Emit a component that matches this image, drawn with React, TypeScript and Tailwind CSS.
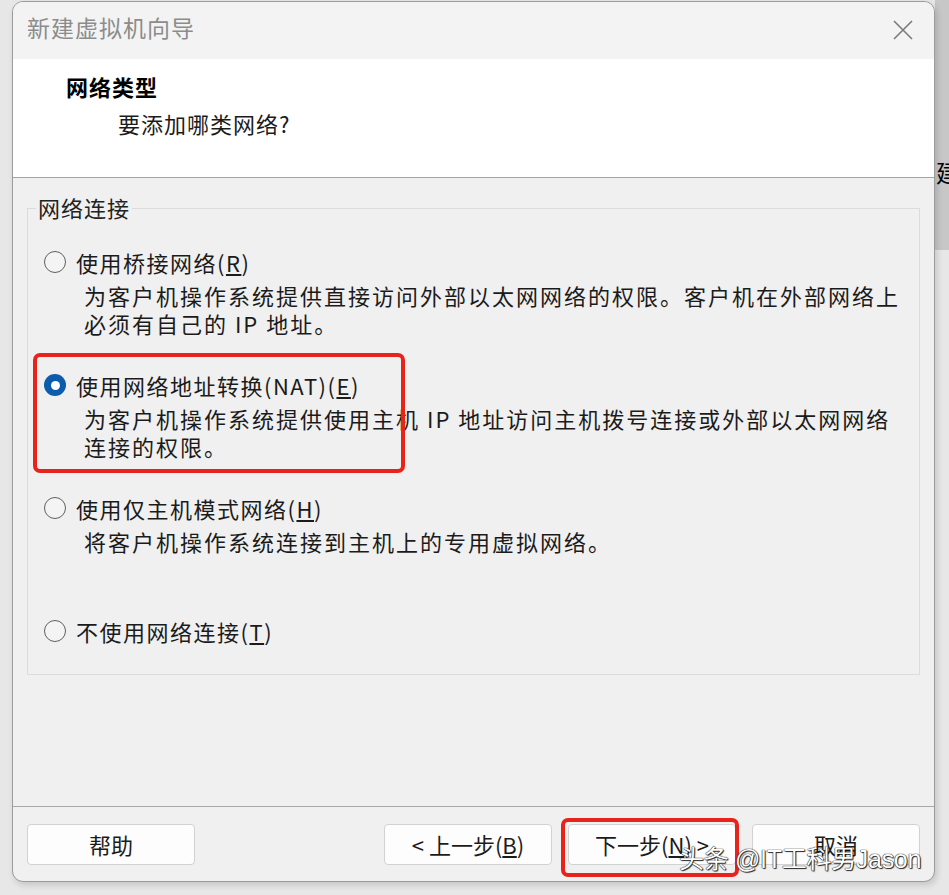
import { ReactNode } from "react"

type Option = {
  label: ReactNode
  desc: string[]
  checked?: boolean
}

const options: Option[] = [
  {
    label: <>使用桥接网络(<span className="underline">R</span>)</>,
    desc: ["为客户机操作系统提供直接访问外部以太网网络的权限。客户机在外部网络上", "必须有自己的 IP 地址。"],
  },
  {
    label: <>使用网络地址转换(NAT)(<span className="underline">E</span>)</>,
    desc: ["为客户机操作系统提供使用主机 IP 地址访问主机拨号连接或外部以太网网络", "连接的权限。"],
    checked: true,
  },
  {
    label: <>使用仅主机模式网络(<span className="underline">H</span>)</>,
    desc: ["将客户机操作系统连接到主机上的专用虚拟网络。", ""],
  },
  {
    label: <>不使用网络连接(<span className="underline">T</span>)</>,
    desc: [],
  },
]

function Radio({ checked }: { checked?: boolean }) {
  if (checked) {
    return (
      <span className="w-[22px] h-[22px] rounded-full bg-[#0b5cad] flex items-center justify-center shrink-0">
        <span className="w-[9px] h-[9px] rounded-full bg-white" />
      </span>
    )
  }
  return <span className="w-[22px] h-[22px] rounded-full border-[1.5px] border-[#5f5f5f] bg-[#f4f4f4] shrink-0" />
}

function Btn({ children }: { children: ReactNode }) {
  return (
    <button className="w-[168px] h-[41px] bg-[#fdfdfd] border border-[#d2d2d2] rounded-[4px] text-[22px] text-[#1b1b1b] flex items-center justify-center">
      {children}
    </button>
  )
}

export default function App() {
  return (
    <div
      className="w-[949px] h-[895px] bg-[#e7e7e7] relative overflow-hidden pl-[12px] pt-[1px]"
      style={{ fontFamily: '"Noto Sans CJK SC", "Noto Sans", sans-serif' }}
    >
      {/* window behind, on the right */}
      <div className="absolute right-0 top-0 w-[14px] h-[250px] bg-[#c7c7c7] overflow-hidden">
        <span className="absolute left-[1px] top-[160px] text-[24px] leading-none text-black">建</span>
      </div>

      <div className="relative w-[923px] h-[881px] rounded-[11px] border border-[#9c9c9c] bg-[#f0f0f0] overflow-hidden flex flex-col shadow-[2px_3px_6px_rgba(0,0,0,0.15)]">
        {/* title bar */}
        <div className="h-[57px] bg-[#f3f3f3] flex items-center justify-between pl-[14px] pr-[20px] pb-[6px] shrink-0">
          <span className="text-[23px] text-[#8c8c8c] tracking-[1px]">新建虚拟机向导</span>
          <svg width="22" height="22" viewBox="0 0 22 22" fill="none" stroke="#7a7a7a" strokeWidth="1.6" className="mt-[4px]">
            <path d="M2 2 L20 20 M20 2 L2 20" />
          </svg>
        </div>

        {/* header */}
        <div className="h-[119px] bg-white border-b border-[#a3a3a3] shrink-0 flex flex-col pt-[12px]">
          <div className="pl-[53px] text-[22px] font-bold text-black leading-[30px] tracking-[1px]">网络类型</div>
          <div className="pl-[105px] mt-[7px] text-[22px] text-[#1b1b1b] leading-[30px] tracking-[1px]">要添加哪类网络?</div>
        </div>

        {/* body */}
        <div className="flex-1 px-[14px] pt-[30px]">
          <div className="relative border border-[#dcdcdc] h-[467px] pt-[39px] pl-[16px]">
            <span className="absolute left-[8px] -top-[16px] px-[2px] bg-[#f0f0f0] text-[22px] leading-[28px] text-[#222] tracking-[1px]">
              网络连接
            </span>
            <div className="flex flex-col gap-[34px]">
              {options.map((o, i) => (
                <div key={i} className="flex flex-col">
                  <div className="flex items-center gap-[10px] h-[28px]">
                    <Radio checked={o.checked} />
                    <span className="text-[22px] leading-[28px] text-[#1b1b1b] tracking-[1.5px]">{o.label}</span>
                  </div>
                  {o.desc.length > 0 && (
                    <div className="mt-[5px] pl-[40px] text-[22px] leading-[28px] text-[#1b1b1b] tracking-[2px]">
                      {o.desc.map((d, j) => (
                        <div key={j} className="h-[28px] whitespace-nowrap">{d}</div>
                      ))}
                    </div>
                  )}
                </div>
              ))}
            </div>
          </div>
        </div>

        {/* footer */}
        <div className="h-[75px] border-t border-[#a8a8a8] shrink-0 flex items-start pt-[17px] px-[14px]">
          <Btn>帮助</Btn>
          <div className="ml-auto flex gap-[16px]">
            <Btn>&lt; 上一步(<span className="underline">B</span>)</Btn>
            <Btn>下一步(<span className="underline">N</span>) &gt;</Btn>
            <Btn>取消</Btn>
          </div>
        </div>

        {/* red highlight boxes */}
        <div className="absolute left-[20px] top-[351px] w-[372px] h-[120px] border-[4px] border-[#e8231c] rounded-[7px]" />
        <div className="absolute left-[548px] top-[816px] w-[178px] h-[59px] border-[4px] border-[#e8231c] rounded-[7px]" />
      </div>

      {/* watermark */}
      <div
        className="absolute left-[679px] top-[842px] text-[25px] leading-[34px] text-white whitespace-nowrap tracking-[-0.3px] [text-shadow:0_0_1px_#000,0_0_1px_#000,1px_1px_1px_rgba(0,0,0,0.8)]"
        style={{ fontFamily: '"Liberation Sans", "Noto Sans CJK SC", sans-serif' }}
      >
        头条 @IT工科男Jason
      </div>
    </div>
  )
}
